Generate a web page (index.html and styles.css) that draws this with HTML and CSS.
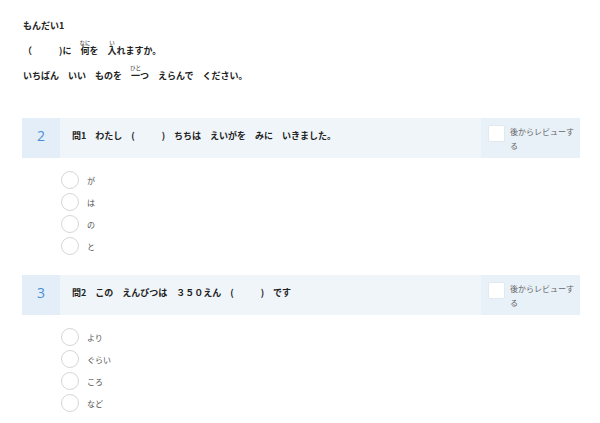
FILE: index.html
```html
<!DOCTYPE html>
<html lang="ja">
<head>
<meta charset="utf-8">
<link rel="stylesheet" href="styles.css">
</head>
<body>
<div class="page">
  <div class="intro">
    <p class="line">もんだい1</p>
    <p class="line">（　　　)に　<ruby>何<rt>なに</rt></ruby>を　<ruby>入<rt>い</rt></ruby>れますか。</p>
    <p class="line">いちばん　いい　ものを　<ruby>一<rt>ひと</rt></ruby>つ　えらんで　ください。</p>
  </div>

  <section class="question">
    <div class="card">
      <div class="num">2</div>
      <div class="qtext">問1　わたし　(　　　)　ちちは　えいがを　みに　いきました。</div>
      <label class="review"><span class="box"></span><span class="rtext">後からレビューする</span></label>
    </div>
    <ul class="options">
      <li class="opt"><span class="radio"></span><span class="olabel">が</span></li>
      <li class="opt"><span class="radio"></span><span class="olabel">は</span></li>
      <li class="opt"><span class="radio"></span><span class="olabel">の</span></li>
      <li class="opt"><span class="radio"></span><span class="olabel">と</span></li>
    </ul>
  </section>

  <section class="question">
    <div class="card">
      <div class="num">3</div>
      <div class="qtext">問2　この　えんぴつは　３５０えん　(　　　)　です</div>
      <label class="review"><span class="box"></span><span class="rtext">後からレビューする</span></label>
    </div>
    <ul class="options">
      <li class="opt"><span class="radio"></span><span class="olabel">より</span></li>
      <li class="opt"><span class="radio"></span><span class="olabel">ぐらい</span></li>
      <li class="opt"><span class="radio"></span><span class="olabel">ころ</span></li>
      <li class="opt"><span class="radio"></span><span class="olabel">など</span></li>
    </ul>
  </section>
</div>
</body>
</html>
```

FILE: styles.css
```css
html, body {
  margin: 0;
  padding: 0;
  background: #ffffff;
}
body {
  font-family: "Noto Sans CJK JP", "Noto Sans", sans-serif;
  color: #222;
}
.page {
  padding: 13px 20px 0 22px;
}
.intro {
  padding-left: 1px;
}
.line {
  margin: 0;
  font-size: 9px;
  font-weight: 700;
  line-height: 25px;
  text-spacing-trim: space-all;
}
.line rt {
  font-size: 5.5px;
  font-weight: 400;
}
.question + .question {
  margin-top: 20px;
}
.intro + .question {
  margin-top: 30px;
}
.card {
  display: flex;
  height: 40px;
  background: #f0f5fa;
  border-radius: 2px;
}
.num {
  width: 38px;
  background: #e4eef8;
  color: #4a8fd6;
  font-size: 14px;
  line-height: 14px;
  padding-top: 11px;
  text-align: center;
  font-family: "Open Sans", "Noto Sans", sans-serif;
}
.qtext {
  flex: 1;
  padding: 11px 0 0 12px;
  font-size: 9px;
  font-weight: 700;
  line-height: 14px;
  color: #222;
}
.review {
  width: 99px;
  box-sizing: border-box;
  background: #e8f0f8;
  display: flex;
  align-items: flex-start;
  padding: 7px 0 0 7px;
}
.box {
  width: 17px;
  height: 17px;
  flex: none;
  background: #fff;
  border: 1px solid #e2e8ef;
  box-sizing: border-box;
  border-radius: 2px;
}
.rtext {
  width: 64px;
  margin-left: 5px;
  font-size: 8px;
  line-height: 14px;
  color: #666;
  word-break: break-all;
}
.options {
  list-style: none;
  margin: 13px 0 0 0;
  padding: 0 0 0 39px;
}
.opt {
  display: flex;
  align-items: center;
  height: 18px;
}
.opt + .opt {
  margin-top: 4px;
}
.radio {
  width: 18px;
  height: 18px;
  box-sizing: border-box;
  border: 1.5px solid #d6d6d6;
  border-radius: 50%;
  background: #fff;
  flex: none;
}
.olabel {
  margin-left: 8px;
  font-size: 8px;
  color: #555;
}
```
